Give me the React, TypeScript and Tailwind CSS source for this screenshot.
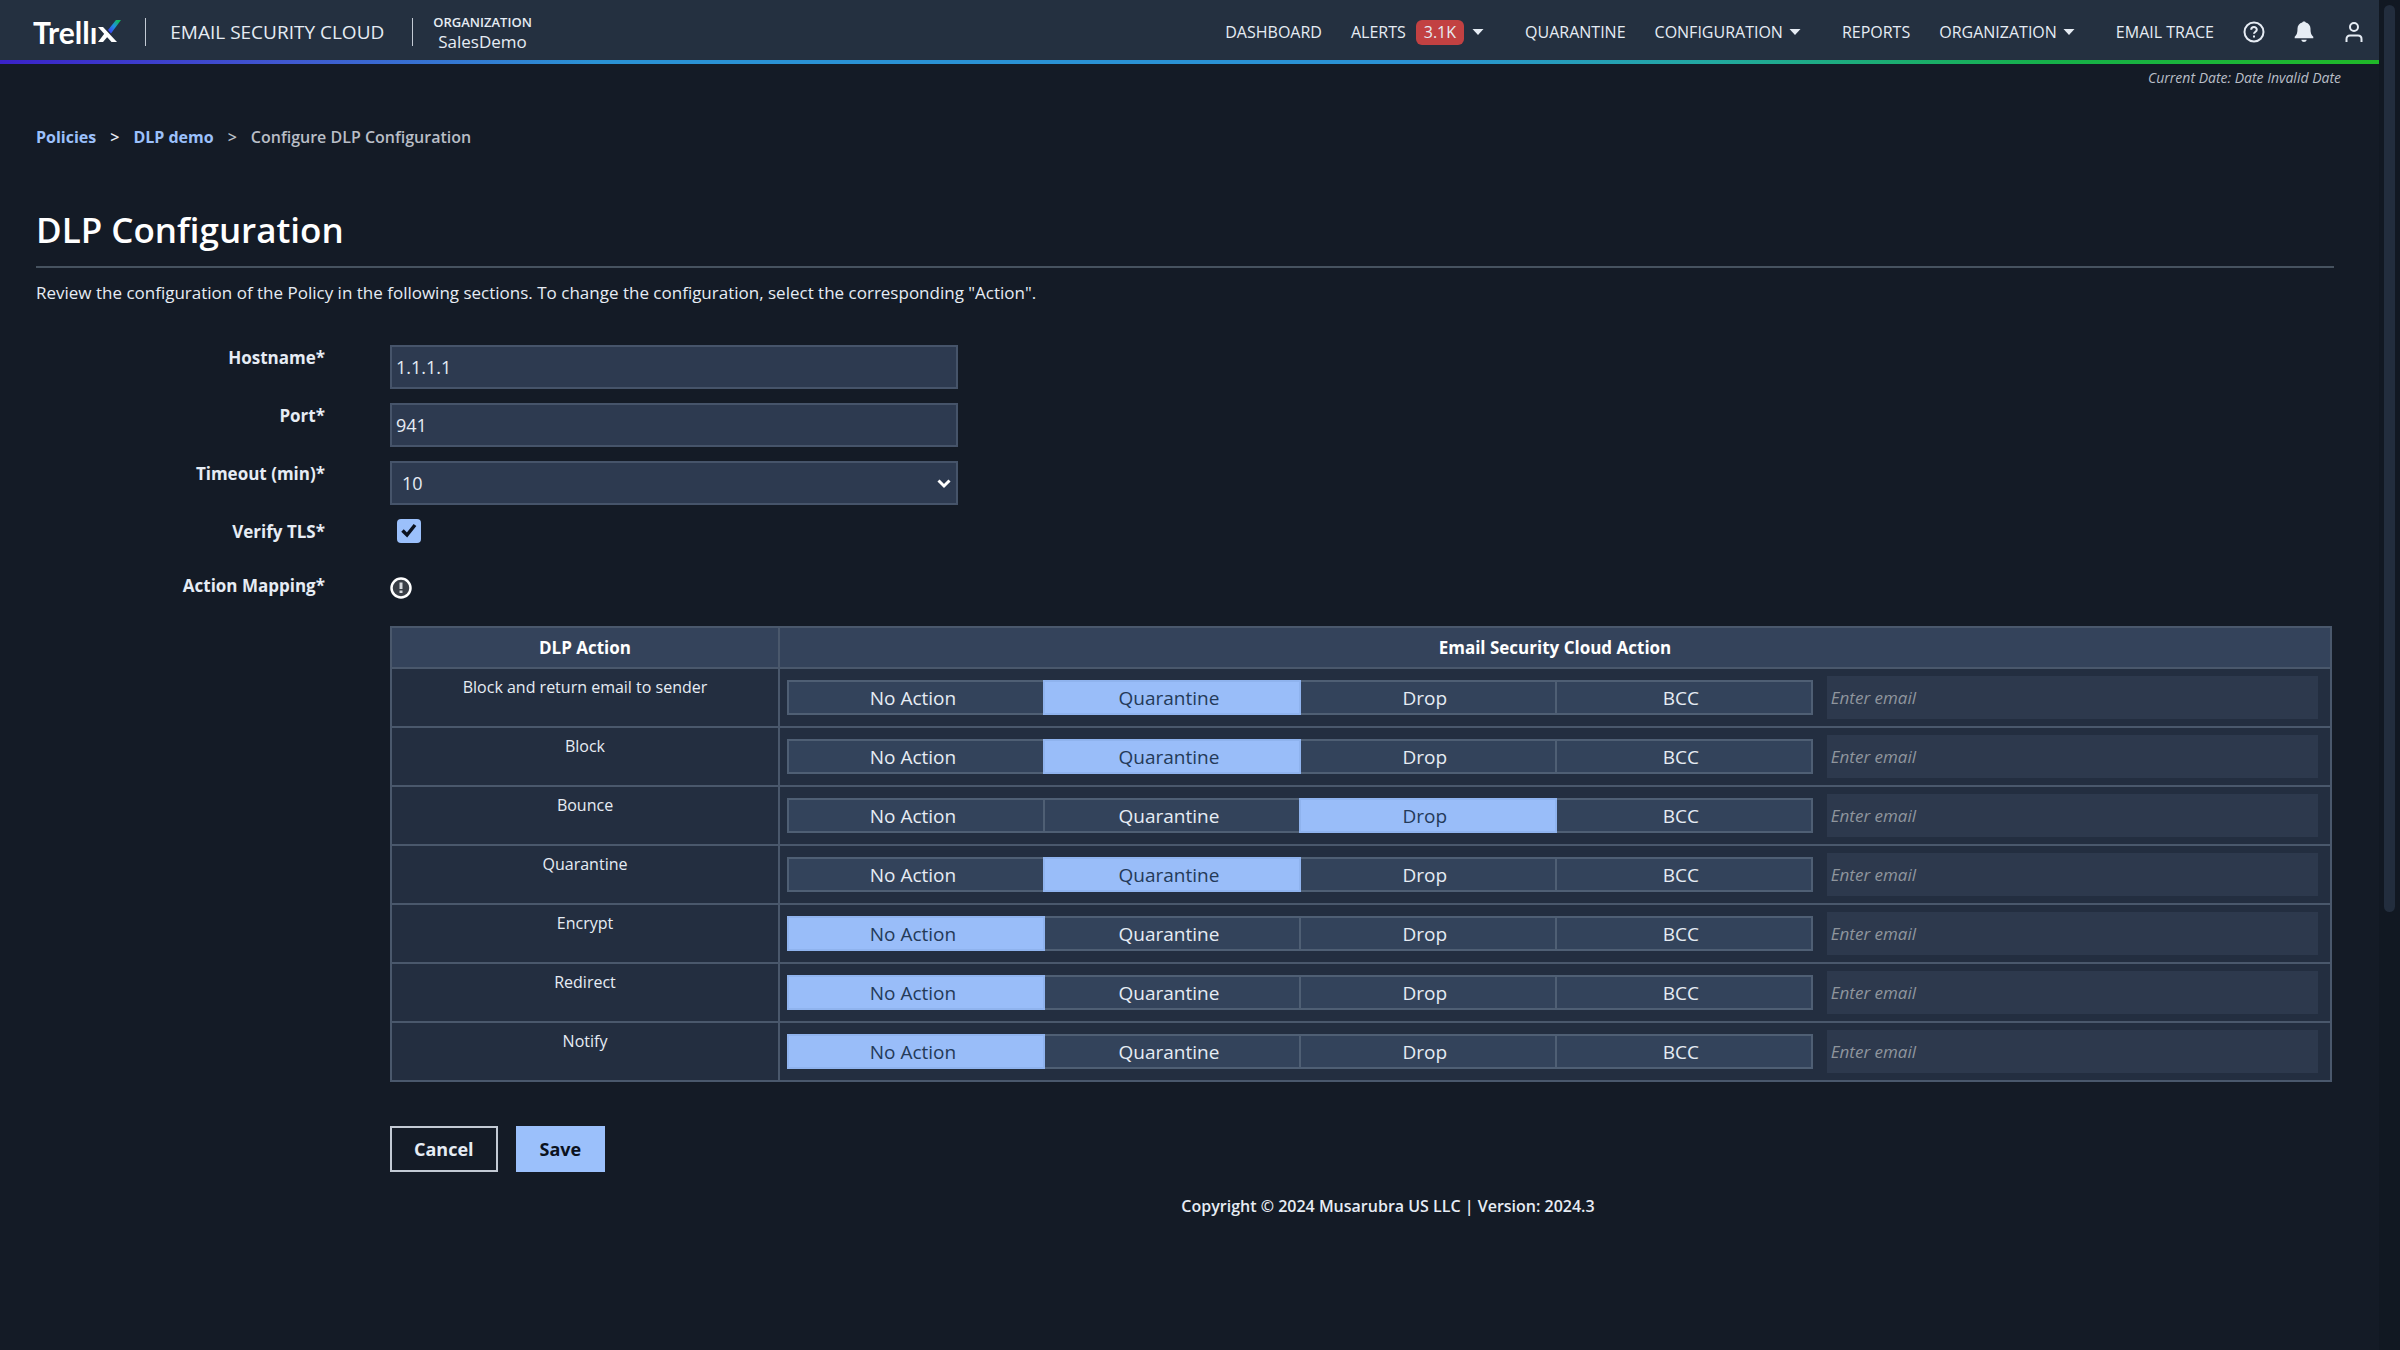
import { useState } from 'react';

type Mapping = { name: string; action: string };

const ACTIONS = ['No Action', 'Quarantine', 'Drop', 'BCC'];

const INITIAL_MAPPINGS: Mapping[] = [
  { name: 'Block and return email to sender', action: 'Quarantine' },
  { name: 'Block', action: 'Quarantine' },
  { name: 'Bounce', action: 'Drop' },
  { name: 'Quarantine', action: 'Quarantine' },
  { name: 'Encrypt', action: 'No Action' },
  { name: 'Redirect', action: 'No Action' },
  { name: 'Notify', action: 'No Action' },
];

function TrellixLogo() {
  return (
    <span className="flex items-center font-['Lato',sans-serif] text-[30px] leading-8 font-bold text-white">
      <span>Trellı</span>
      <svg className="h-6 w-6" viewBox="0 0 24 24" aria-hidden="true">
        <defs>
          <linearGradient id="slash" x1="0" y1="1" x2="1" y2="0">
            <stop offset="0.1" stopColor="#3b3ff0" />
            <stop offset="0.5" stopColor="#1f8fe0" />
            <stop offset="0.85" stopColor="#12b866" />
          </linearGradient>
        </defs>
        <path d="M1 7h5l14 15h-5.500z" fill="#fff" />
        <path d="M1 22h5l6-7-3-3.500z" fill="#fff" />
        <path d="M11 10 19 0h5L14 13.500z" fill="url(#slash)" />
      </svg>
    </span>
  );
}

function Caret() {
  return (
    <svg className="h-2 w-3" viewBox="0 0 12 8" aria-hidden="true">
      <path d="M0.5 1h11L6 7z" fill="currentColor" />
    </svg>
  );
}

function Header() {
  return (
    <header className="bg-[#243040]">
      <div className="flex h-[60px] items-center justify-between pt-1 pr-[14px] pl-[33px]">
        <div className="flex items-center gap-6">
          <a href="#" aria-label="Trellix">
            <TrellixLogo />
          </a>
          <span className="h-7 w-px bg-[#c3cad4]" />
          <span className="pr-1 text-[19px]">EMAIL SECURITY CLOUD</span>
          <span className="h-7 w-px bg-[#c3cad4]" />
          <div className="-ml-1 text-center">
            <div className="text-[13px] leading-5 font-semibold">ORGANIZATION</div>
            <div className="text-[17px] leading-5">SalesDemo</div>
          </div>
        </div>
        <nav className="flex items-center gap-[29px] text-base">
          <a href="#">DASHBOARD</a>
          <a href="#" className="mr-3 flex items-center gap-2">
            ALERTS
            <span className="ml-0.5 rounded-md bg-[#c24142] px-2 leading-[25px]">3.1K</span>
            <Caret />
          </a>
          <a href="#">QUARANTINE</a>
          <a href="#" className="mr-3 flex items-center gap-[6px]">
            CONFIGURATION
            <Caret />
          </a>
          <a href="#">REPORTS</a>
          <a href="#" className="mr-3 flex items-center gap-[6px]">
            ORGANIZATION
            <Caret />
          </a>
          <a href="#">EMAIL TRACE</a>
          <div className="flex gap-7">
            <button type="button" aria-label="Help">
              <svg className="size-[22px]" viewBox="0 0 22 22" fill="none" stroke="currentColor" strokeWidth="2" aria-hidden="true">
                <circle cx="11" cy="11" r="9.5" />
                <path d="M8.2 8.800c0-3.600 5.600-3.600 5.600 0 0 1.900-2.800 2-2.800 4" />
                <path d="M11 14.500v2" />
              </svg>
            </button>
            <button type="button" aria-label="Notifications">
              <svg className="size-[22px]" viewBox="0 0 22 22" fill="currentColor" aria-hidden="true">
                <path d="M11 0.500c-1 0-1.500.4-1.700 1C6.400 2.200 4.500 4.500 4.500 7.500c0 4.500-.8 6.500-2.800 8.200v1.600h18.600v-1.600c-2-1.700-2.800-3.700-2.800-8.200 0-3-1.900-5.300-4.800-6-.2-.6-.7-1-1.700-1zM8.300 18.800c.5 3 4.900 3 5.400 0z" />
              </svg>
            </button>
            <button type="button" aria-label="Account">
              <svg className="size-[22px]" viewBox="0 0 22 22" fill="none" stroke="currentColor" strokeWidth="2" aria-hidden="true">
                <circle cx="11" cy="6" r="4" />
                <path d="M3.500 21v-3c0-2.200 1.300-3.500 3.500-3.500h8c2.200 0 3.500 1.300 3.500 3.500v3" />
              </svg>
            </button>
          </div>
        </nav>
      </div>
      <div className="h-1 bg-[linear-gradient(90deg,#3a22c8_0%,#4058d0_12%,#2a92d4_25%,#2a92d4_60%,#22a9a0_72%,#16b04a_86%,#20b828_100%)]" />
    </header>
  );
}

function Breadcrumb() {
  return (
    <nav aria-label="Breadcrumb" className="mt-[37px] flex gap-[14px] text-base font-semibold text-[#b9bec6]">
      <a href="#" className="font-bold text-[#9bc0fb]">Policies</a>
      <span className="text-[#e6ecf4]">&gt;</span>
      <a href="#" className="font-bold text-[#9bc0fb]">DLP demo</a>
      <span>&gt;</span>
      <span>Configure DLP Configuration</span>
    </nav>
  );
}

const labelClass = 'text-right text-[17px] leading-[26px] font-bold';
const fieldClass = 'h-11 w-full border-2 border-[#46546a] bg-[#2d3a50] text-lg';

function SettingsFields() {
  return (
    <div className="mt-[38px] grid grid-cols-[289px_568px] gap-x-[65px] gap-y-[14px]">
      <label htmlFor="hostname" className={labelClass}>Hostname*</label>
      <input id="hostname" type="text" defaultValue="1.1.1.1" className={`${fieldClass} px-1`} />

      <label htmlFor="port" className={labelClass}>Port*</label>
      <input id="port" type="text" defaultValue="941" className={`${fieldClass} px-1`} />

      <label htmlFor="timeout" className={labelClass}>Timeout (min)*</label>
      <div className="relative">
        <select id="timeout" defaultValue="10" className={`${fieldClass} appearance-none px-[10px]`}>
          <option>5</option>
          <option>10</option>
          <option>15</option>
        </select>
        <svg className="pointer-events-none absolute top-[17px] right-[7px] h-3 w-[14px]" viewBox="0 0 14 12" fill="none" stroke="#fff" strokeWidth="3" aria-hidden="true">
          <path d="m1.500 2.500 5.500 5.500 5.500-5.500" />
        </svg>
      </div>

      <label htmlFor="verify-tls" className={labelClass}>Verify TLS*</label>
      <div className="relative h-10 pl-[7px]">
        <input id="verify-tls" type="checkbox" defaultChecked className="peer block size-6 appearance-none rounded-sm bg-[#2d3a50] checked:bg-[#9bc0fb]" />
        <svg className="pointer-events-none absolute top-0 left-[7px] hidden size-6 peer-checked:block" viewBox="0 0 24 24" fill="none" stroke="#0b1220" strokeWidth="3.500" aria-hidden="true">
          <path d="m5.500 11.500 4.500 4.500 8-10" />
        </svg>
      </div>

      <span className={labelClass}>Action Mapping*</span>
      <button type="button" aria-label="About action mapping" className="pt-1">
        <svg className="size-[22px]" viewBox="0 0 22 22" aria-hidden="true">
          <circle cx="11" cy="11" r="9.5" fill="#3a3f47" stroke="#fff" strokeWidth="2.500" />
          <path d="M11 5.500v6.500" stroke="#d5d8dc" strokeWidth="3" />
          <path d="M11 13.500v2.500" stroke="#d5d8dc" strokeWidth="3" />
        </svg>
      </button>
    </div>
  );
}

function MappingRow({ mapping, onSelect }: { mapping: Mapping; onSelect: (action: string) => void }) {
  return (
    <tr className="h-[59px] bg-[#232e40]">
      <td className="border-2 border-[#4a586c] pt-[6px] text-center align-top text-base font-medium">{mapping.name}</td>
      <td className="border-2 border-[#4a586c] py-0 pr-3 pl-[7px]">
        <div className="flex items-center gap-[14px]">
          <div role="group" aria-label={mapping.name} className="grid w-[67%] grid-cols-4 pl-0.5">
            {ACTIONS.map((action) => (
              <button
                key={action}
                type="button"
                aria-pressed={action === mapping.action}
                onClick={() => onSelect(action)}
                className={
                  action === mapping.action
                    ? 'relative -ml-0.5 h-[35px] border-2 border-[#8fb3ee] bg-[#99bdf9] pr-[6px] text-[19px] leading-7 text-[#243a58]'
                    : '-ml-0.5 h-[35px] border-2 border-[#4f5f74] bg-[#33435b] pr-[6px] text-[19px] leading-7'
                }
              >
                {action}
              </button>
            ))}
          </div>
          <input
            type="email"
            aria-label={`BCC email for ${mapping.name}`}
            placeholder="Enter email"
            className="h-[43px] min-w-0 flex-1 bg-[#2d394d] px-1 text-[17px] italic placeholder:text-[#8f959d]"
          />
        </div>
      </td>
    </tr>
  );
}

export default function App() {
  const [mappings, setMappings] = useState(INITIAL_MAPPINGS);

  const selectAction = (name: string, action: string) => {
    setMappings(mappings.map((m) => (m.name === name ? { ...m, action } : m)));
  };

  return (
    <div className="flex min-h-screen bg-[#141b26] font-['Open_Sans',sans-serif] text-[#e6ecf4]">
      <div className="min-w-0 flex-1">
        <Header />
        <p className="pt-1 pr-[38px] text-right text-sm font-medium text-[#b9bec6] italic">
          Current Date: Date Invalid Date
        </p>
        <main className="pr-[45px] pl-9">
          <Breadcrumb />
          <h1 className="mt-14 border-b-2 border-[#46525f] pb-[11px] text-[35px] leading-[50px] font-semibold text-white">
            DLP Configuration
          </h1>
          <p className="mt-[11px] text-[17px] leading-7 font-medium">
            Review the configuration of the Policy in the following sections. To change the configuration, select the corresponding "Action".
          </p>
          <form>
            <SettingsFields />
            <div className="mt-[27px] mr-0.5 ml-[354px]">
              <table className="w-full table-fixed border-collapse">
                <thead>
                  <tr className="h-[41px] bg-[#34435b] text-[17px] text-white">
                    <th className="w-[388px] border-2 border-[#4a586c] p-0 font-bold">DLP Action</th>
                    <th className="border-2 border-[#4a586c] p-0 font-bold">Email Security Cloud Action</th>
                  </tr>
                </thead>
                <tbody>
                  {mappings.map((m) => (
                    <MappingRow key={m.name} mapping={m} onSelect={(action) => selectAction(m.name, action)} />
                  ))}
                </tbody>
              </table>
              <div className="mt-11 flex gap-[18px] text-lg font-bold">
                <button type="button" className="h-[46px] border-2 border-[#c3cad4] px-[22px]">Cancel</button>
                <button type="submit" className="h-[46px] bg-[#9bc0fb] px-6 text-[#0b1220]">Save</button>
              </div>
            </div>
          </form>
        </main>
        <footer className="mt-[22px] pl-[397px] text-center text-base font-semibold">
          Copyright © 2024 Musarubra US LLC | Version: 2024.3
        </footer>
      </div>
      <div className="w-[21px] bg-[#111822] px-[5px] pt-[5px]" aria-hidden="true">
        <div className="h-[907px] rounded-full bg-[#222d3d]" />
      </div>
    </div>
  );
}
